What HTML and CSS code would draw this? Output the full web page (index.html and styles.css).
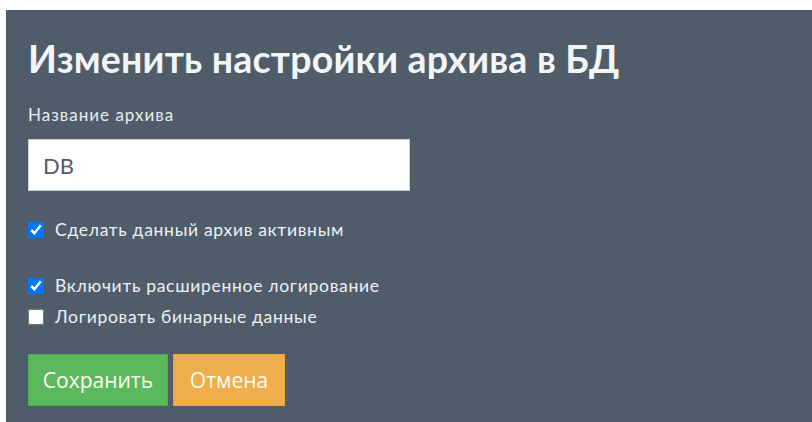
FILE: index.html
```html
<!DOCTYPE html>
<html lang="ru">
<head>
<meta charset="utf-8">
<title>Изменить настройки архива в БД</title>
<link rel="stylesheet" href="styles.css">
</head>
<body>
<main class="panel">
  <h1 class="title">Изменить настройки архива в БД</h1>
  <label class="field-label" for="archive-name">Название архива</label>
  <input class="text-input" id="archive-name" type="text" value="DB">
  <label class="check check-first"><input type="checkbox" checked><span>Сделать данный архив активным</span></label>
  <label class="check check-second"><input type="checkbox" checked><span>Включить расширенное логирование</span></label>
  <label class="check check-third"><input type="checkbox"><span>Логировать бинарные данные</span></label>
  <div class="actions">
    <button class="btn btn-save" type="button">Сохранить</button>
    <button class="btn btn-cancel" type="button">Отмена</button>
  </div>
</main>
</body>
</html>
```

FILE: styles.css
```css
html, body {
  margin: 0;
  padding: 0;
  background: #ffffff;
  height: 100%;
}

body {
  display: flex;
  flex-direction: column;
  overflow: hidden;
}

.panel {
  flex: 1;
  margin: 10px 0 0 6px;
  padding: 28px 22px 0 22px;
  background: #4f5d6b;
  font-family: Lato, "Noto Sans", sans-serif;
  color: #eef0f2;
  display: flex;
  flex-direction: column;
  align-items: flex-start;
}

.title {
  margin: 0;
  font-size: 37.5px;
  line-height: 42px;
  font-weight: 700;
  color: #f4f5f6;
  letter-spacing: 0.2px;
}

.field-label {
  margin-top: 24px;
  font-size: 17px;
  line-height: 22px;
  letter-spacing: 1px;
  color: #e9ecef;
}

.text-input {
  margin-top: 13px;
  box-sizing: border-box;
  width: 382px;
  height: 52px;
  padding: 0 14px;
  border: 1px solid #c9ced4;
  background: #ffffff;
  font-family: Lato, "Noto Sans", sans-serif;
  font-size: 22px;
  color: #555b62;
  outline: none;
}

.check {
  display: flex;
  align-items: center;
  gap: 11px;
  font-size: 17.5px;
  line-height: 22px;
  letter-spacing: 0.7px;
  color: #eef0f2;
}

.check input {
  margin: 0;
  width: 16px;
  height: 16px;
  accent-color: #0075ff;
}

.check-first { margin-top: 28px; }
.check-second { margin-top: 34px; }
.check-third { margin-top: 9px; }

.actions {
  margin-top: 26px;
  display: flex;
  gap: 5px;
}

.btn {
  height: 52px;
  border: 1px solid transparent;
  border-radius: 0;
  padding: 0 12px;
  font-family: "Open Sans", "Noto Sans", sans-serif;
  font-size: 21px;
  color: #fbfff0;
  cursor: pointer;
}

.btn-save {
  width: 140px;
  background: #5cb85c;
  border-color: #4cae4c;
}

.btn-cancel {
  width: 112px;
  background: #f0ad4e;
  border-color: #eea236;
}
```
